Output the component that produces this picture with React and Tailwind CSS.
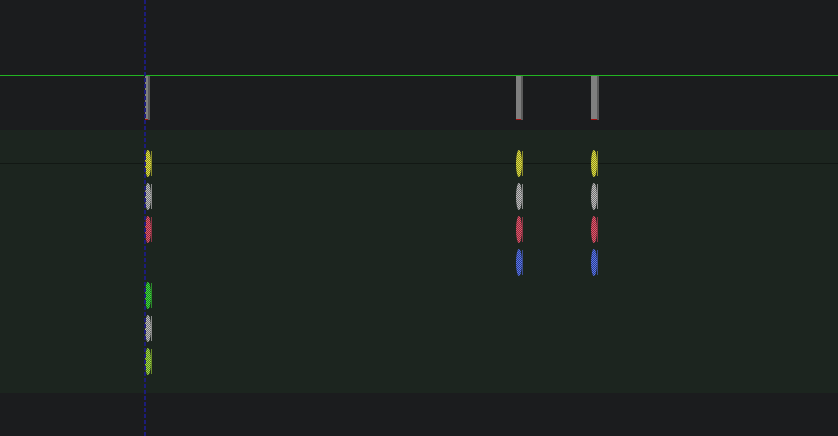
import React, { useId } from 'react';

// keyframe colours: [fill, checker dark, side line]
const colors = {
    yellow: ['#e2e244', '#8a8a22', '#8a8a2a'],
    gray: ['#c0c0c0', '#707070', '#8a8a8a'],
    red: ['#e4586e', '#8a2c3c', '#8a3444'],
    blue: ['#5a78ec', '#2c3c8a', '#3a4c90'],
    green: ['#40e040', '#1e7a1e', '#2a8a2a'],
    lime: ['#a4dc48', '#56801e', '#6a8a2a'],
};

const rows = [
    { keys: [[145, 'yellow'], [516, 'yellow'], [591, 'yellow']] },
    { keys: [[145, 'gray'], [516, 'gray'], [591, 'gray']] },
    { keys: [[145, 'red'], [516, 'red'], [591, 'red']] },
    { keys: [[516, 'blue'], [591, 'blue']] },
    { keys: [[145, 'green']] },
    { keys: [[145, 'gray']] },
    { keys: [[145, 'lime']] },
];

function Keyframe({ x, color }) {
    const [fill, dark, side] = colors[color];
    const id = useId().replace(/:/g, '');
    return (
        <svg
            className="absolute top-0"
            style={{ left: x }}
            width="7"
            height="27"
            viewBox="0 0 7 27"
        >
            <defs>
                <pattern id={id} width="2" height="2" patternUnits="userSpaceOnUse">
                    <rect width="2" height="2" fill={dark} />
                    <rect width="1" height="1" fill={fill} />
                    <rect x="1" y="1" width="1" height="1" fill={fill} />
                </pattern>
            </defs>
            <ellipse cx="3" cy="13.5" rx="3" ry="13.5" fill={`url(#${id})`} />
            <rect x="6" y="1" width="1" height="25" fill={side} />
        </svg>
    );
}

function SummaryBar({ x, w }) {
    return (
        <div className="absolute top-0 flex h-[44px]" style={{ left: x }}>
            <div className="flex h-full flex-col bg-[#7f7f7f]" style={{ width: w }}>
                <div className="flex-1" />
                <div className="h-px bg-[#a01010]" />
            </div>
            <div className="h-full w-[2px] bg-[#5a5a5a]" />
        </div>
    );
}

export default function App() {
    return (
        <div className="relative flex h-[436px] w-[838px] flex-col overflow-hidden bg-[#1b1c1e] font-['Liberation_Sans',sans-serif]">
            {/* header space */}
            <div className="h-[75px]" />
            <div className="h-px bg-[#22b422]" />

            {/* summary row */}
            <div className="relative h-[54px]">
                <SummaryBar x={145} w={3} />
                <SummaryBar x={516} w={5} />
                <SummaryBar x={591} w={6} />
            </div>

            {/* channel area */}
            <div className="relative flex h-[263px] flex-col bg-[#1c251f]">
                <div className="absolute left-0 right-0 top-[33px] h-px bg-[#121814]" />
                <div className="flex flex-col gap-[6px] pt-[20px]">
                    {rows.map((row, i) => (
                        <div key={i} className="relative h-[27px]">
                            {row.keys.map(([x, c]) => (
                                <Keyframe key={x} x={x} color={c} />
                            ))}
                        </div>
                    ))}
                </div>
            </div>

            <div className="flex-1" />

            {/* playhead */}
            <div className="absolute bottom-0 left-[144px] top-0 w-[2px] bg-[repeating-linear-gradient(to_bottom,#1c1c7a_0_4px,transparent_4px_6px)]" />
        </div>
    );
}
